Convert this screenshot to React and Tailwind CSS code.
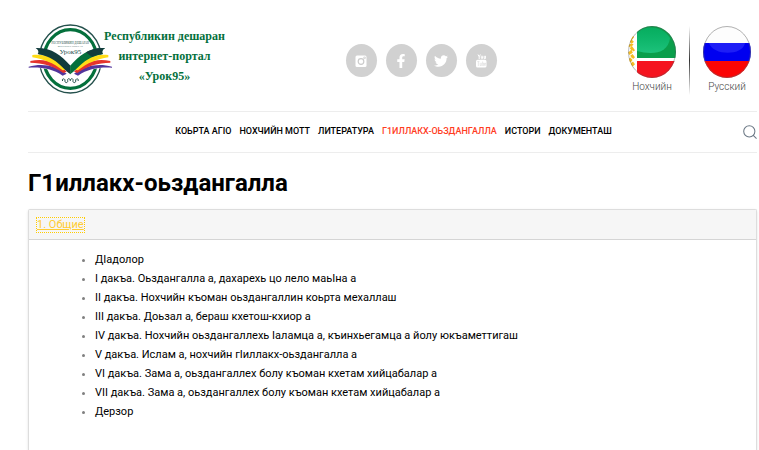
import { Search } from "lucide-react";
import { FaFacebookF, FaTwitter } from "react-icons/fa";

const NAV = [
  { label: "Коьрта агIо" },
  { label: "Нохчийн мотт" },
  { label: "Литература" },
  { label: "Г1иллакх-оьздангалла", active: true },
  { label: "Истори" },
  { label: "Документаш" }
];

const TOPICS = [
  "ДIадолор",
  "I дакъа. Оьздангалла а, дахарехь цо лело маьIна а",
  "II дакъа. Нохчийн къоман оьздангаллин коьрта мехаллаш",
  "III дакъа. Доьзал а, бераш кхетош-кхиор а",
  "IV дакъа. Нохчийн оьздангаллехь Iаламца а, къинхьегамца а йолу юкъаметтигаш",
  "V дакъа. Ислам а, нохчийн гIиллакх-оьздангалла а",
  "VI дакъа. Зама а, оьздангаллех болу къоман кхетам хийцабалар а",
  "VII дакъа. Зама а, оьздангаллех болу къоман кхетам хийцабалар а",
  "Дерзор"
];

function InstagramIcon({ className }) {
  return (
    <svg viewBox="0 0 14 14" className={className} aria-hidden="true">
      <rect x="1.5" y="1.5" width="11" height="11.5" rx="1.5" fill="currentColor" />
      <circle cx="7" cy="7.5" r="2.8" fill="none" stroke="#cbcbcb" strokeWidth="1.2" />
      <path d="M9.8 3H11.3V4.6H9.8Z" fill="none" stroke="#cbcbcb" strokeWidth="0.7" />
    </svg>
  );
}

function YoutubeIcon({ className }) {
  return (
    <svg viewBox="0 0 14 14" className={className} aria-hidden="true">
      <path
        d="M4 0.5L5.2 2.8V5M6.4 0.5L5.2 2.8M7.3 2.4V4.2C7.3 5 8.6 5 8.6 4.2V2.4C8.6 1.7 7.3 1.7 7.3 2.4M10.2 1.8V4.6H11.4V1.8"
        fill="none"
        stroke="currentColor"
        strokeWidth="1"
      />
      <rect x="2" y="5.8" width="10.5" height="7.7" rx="1.6" fill="currentColor" />
      <path
        d="M3.3 7.6H5.5M4.4 7.6V12M6.2 8.8V11.6H7.4V8.8M8.6 7.4V11.6H9.5V9H8.6M11.6 11.5H10.6V9.2H11.6V10.3H10.6"
        fill="none"
        stroke="#cbcbcb"
        strokeWidth="0.4"
      />
    </svg>
  );
}

const SOCIAL = [
  { label: "Instagram", icon: InstagramIcon },
  { label: "Facebook", icon: FaFacebookF },
  { label: "Twitter", icon: FaTwitter },
  { label: "YouTube", icon: YoutubeIcon }
];

function BookSide({ cover, tip }) {
  return (
    <>
      <path d="M20 100C60 100 100 130 122 160L96 166C70 146 44 142 20 144Z" fill="#fff" />
      <path d="M2 139C44 128 84 136 116 160L104 166C74 145 40 140 2 142Z" fill="#53359c" />
      <path d="M7 122C50 113 88 126 116 154L106 158C76 136 44 128 7 127Z" fill="#e5342c" />
      <path d="M13 104C54 99 90 116 116 148L104 150C76 128 46 116 13 111Z" fill="#ffdc16" />
      <path d="M23 83C72 82 98 104 127.500 136V162C100 142 84 110 29 101C34 94 30 88 23 83Z" fill={cover} />
      {tip && <path d="M23 83C50 82 66 88 80 96L62 110C52 105 42 103 29 101C34 94 30 88 23 83Z" fill={tip} />}
    </>
  );
}

function Emblem() {
  return (
    <svg viewBox="0 0 252 216" className="h-[72px] w-[84px] shrink-0" aria-hidden="true">
      <g transform="translate(0 -8)">
        <ellipse cx="127" cy="116" rx="93" ry="102" fill="#fff" stroke="#24504c" strokeWidth="4" />
        <ellipse cx="127" cy="116" rx="79" ry="88" fill="none" stroke="#04703c" strokeWidth="10" />
        <BookSide cover="#123b3c" />
        <g transform="translate(254 0) scale(-1 1)">
          <BookSide cover="#04703c" tip="#123b3c" />
        </g>
        <path
          d="M104 182c-5-8 9-9 7 0c-1 7 10 6 8-1c-2-8 8-8 8 0c0-8 10-8 8 0c-2 7 9 8 8 1c-2-9 12-8 7 0"
          fill="none"
          stroke="#24504c"
          strokeWidth="3"
        />
        <g fill="#24504c" textAnchor="middle" className="font-['Liberation_Serif',serif]">
          <text x="127" y="70" fontSize="9">РЕСПУБЛИКИН ДЕШАРАН</text>
          <text x="127" y="80" fontSize="8">ИНТЕРНЕТ-ПОРТАЛ</text>
          <text x="127" y="102" fontSize="21">Урок95</text>
        </g>
      </g>
    </svg>
  );
}

function ChechenFlag() {
  return (
    <svg viewBox="0 0 48 52" preserveAspectRatio="none" className="h-[52px] w-[48px]" aria-hidden="true">
      <defs>
        <clipPath id="chechen-clip">
          <ellipse cx="24" cy="26" rx="24" ry="26" />
        </clipPath>
        <linearGradient id="chechen-gloss" x1="0" y1="0" x2="0" y2="1">
          <stop offset="0" stopColor="#00d08c" stopOpacity="0.3" />
          <stop offset="1" stopColor="#2ee0a4" stopOpacity="0.55" />
        </linearGradient>
      </defs>
      <g clipPath="url(#chechen-clip)">
        <path d="M0 0H48V52H0Z" fill="#fff" />
        <path d="M9 0H48V32H9Z" fill="#0a9e4b" />
        <path d="M9 35H48V52H9Z" fill="#f5141f" />
        <path d="M9 7C16 -1 34 -1 42 12C40 28 24 29 9 25Z" fill="url(#chechen-gloss)" />
        <path
          d="M5 10l-3 4 3 3-3 3 3 4-3 3 3 4-3 3 3 4-3 3 3 3"
          fill="none"
          stroke="#f6bd24"
          strokeWidth="3"
          strokeDasharray="4 1"
        />
      </g>
      <ellipse cx="24" cy="26" rx="23.5" ry="25.5" fill="none" stroke="#555" strokeOpacity="0.4" />
    </svg>
  );
}

function RussianFlag() {
  return (
    <svg viewBox="0 0 48 52" preserveAspectRatio="none" className="h-[52px] w-[48px]" aria-hidden="true">
      <defs>
        <clipPath id="russian-clip">
          <ellipse cx="24" cy="26" rx="24" ry="26" />
        </clipPath>
      </defs>
      <g clipPath="url(#russian-clip)">
        <path d="M0 0H48V17H0Z" fill="#fdfdfd" />
        <path d="M0 17H48V35H0Z" fill="#0000f0" />
        <path d="M0 35H48V52H0Z" fill="#fb0505" />
        <path d="M6 17H42C40 30 10 30 6 17Z" fill="#4b4bff" fillOpacity="0.4" />
      </g>
      <ellipse cx="24" cy="26" rx="23.5" ry="25.5" fill="none" stroke="#666" strokeOpacity="0.5" />
    </svg>
  );
}

function LanguageLink({ label, flag: Flag }) {
  return (
    <a href="#" className="flex w-12 flex-col items-center gap-px text-[10px] leading-4 font-light text-[#444]">
      <Flag />
      {label}
    </a>
  );
}

function Header() {
  return (
    <header className="flex items-start justify-between border-b border-[#ededed] pt-[23px] pr-1.5 pb-4">
      <a href="#" className="flex items-start">
        <Emblem />
        <span className="-ml-2 pt-[3px] text-center font-['Liberation_Serif',serif] text-xs leading-5 font-bold whitespace-nowrap text-[#04703c]">
          Республикин дешаран
          <br />
          интернет-портал
          <br />
          «Урок95»
        </span>
      </a>
      <div className="flex gap-[9px] pt-[21px]">
        {SOCIAL.map(({ label, icon: Icon }) => (
          <a
            key={label}
            href="#"
            aria-label={label}
            className="flex h-[33px] w-[31px] items-center justify-center rounded-[50%] bg-[#d1d1d1] text-white"
          >
            <Icon className="h-3.5 w-3.5" />
          </a>
        ))}
      </div>
      <div className="flex gap-[13px] pt-[3px] pl-2.5">
        <LanguageLink label="Нохчийн" flag={ChechenFlag} />
        <div className="w-px bg-linear-to-b from-transparent via-[#333] to-transparent" />
        <LanguageLink label="Русский" flag={RussianFlag} />
      </div>
    </header>
  );
}

function Nav() {
  return (
    <div className="flex h-[41px] items-center border-b border-[#ededed]">
      <nav className="flex flex-1 justify-center gap-2 pl-4 text-[9px] font-medium whitespace-nowrap text-black uppercase">
        {NAV.map(({ label, active }) => (
          <a key={label} href="#" className={active ? "text-[#ff3d1f]" : ""}>
            {label}
          </a>
        ))}
      </nav>
      <button type="button" aria-label="Search" className="text-[#6b7885]">
        <Search viewBox="2 2 20 20" className="h-3.5 w-3.5" strokeWidth={1.5} />
      </button>
    </div>
  );
}

export default function App() {
  return (
    <div className="flex min-h-screen flex-col bg-white pr-0.5 pl-7 font-[Roboto,sans-serif] text-black">
      <Header />
      <Nav />
      <main className="flex flex-1 flex-col pt-[14px]">
        <h1 className="text-2xl leading-8 font-bold">Г1иллакх-оьздангалла</h1>
        <section className="mt-2.5 flex-1 rounded-t-xs border border-b-0 border-[#ddd] shadow-sm">
          <h2 className="flex h-[30px] items-center border-b border-[#d5d5d5] bg-[#f6f6f6] px-2 text-[11px]">
            <a href="#" className="leading-[14px] text-[#fc3] underline outline-1 outline-[#fc0] outline-dotted">
              1. Общие
            </a>
          </h2>
          <ul className="list-disc pt-2.5 pl-[66px] text-[11px] leading-[19px] marker:text-[#808080]">
            {TOPICS.map((topic) => (
              <li key={topic}>{topic}</li>
            ))}
          </ul>
        </section>
      </main>
    </div>
  );
}
